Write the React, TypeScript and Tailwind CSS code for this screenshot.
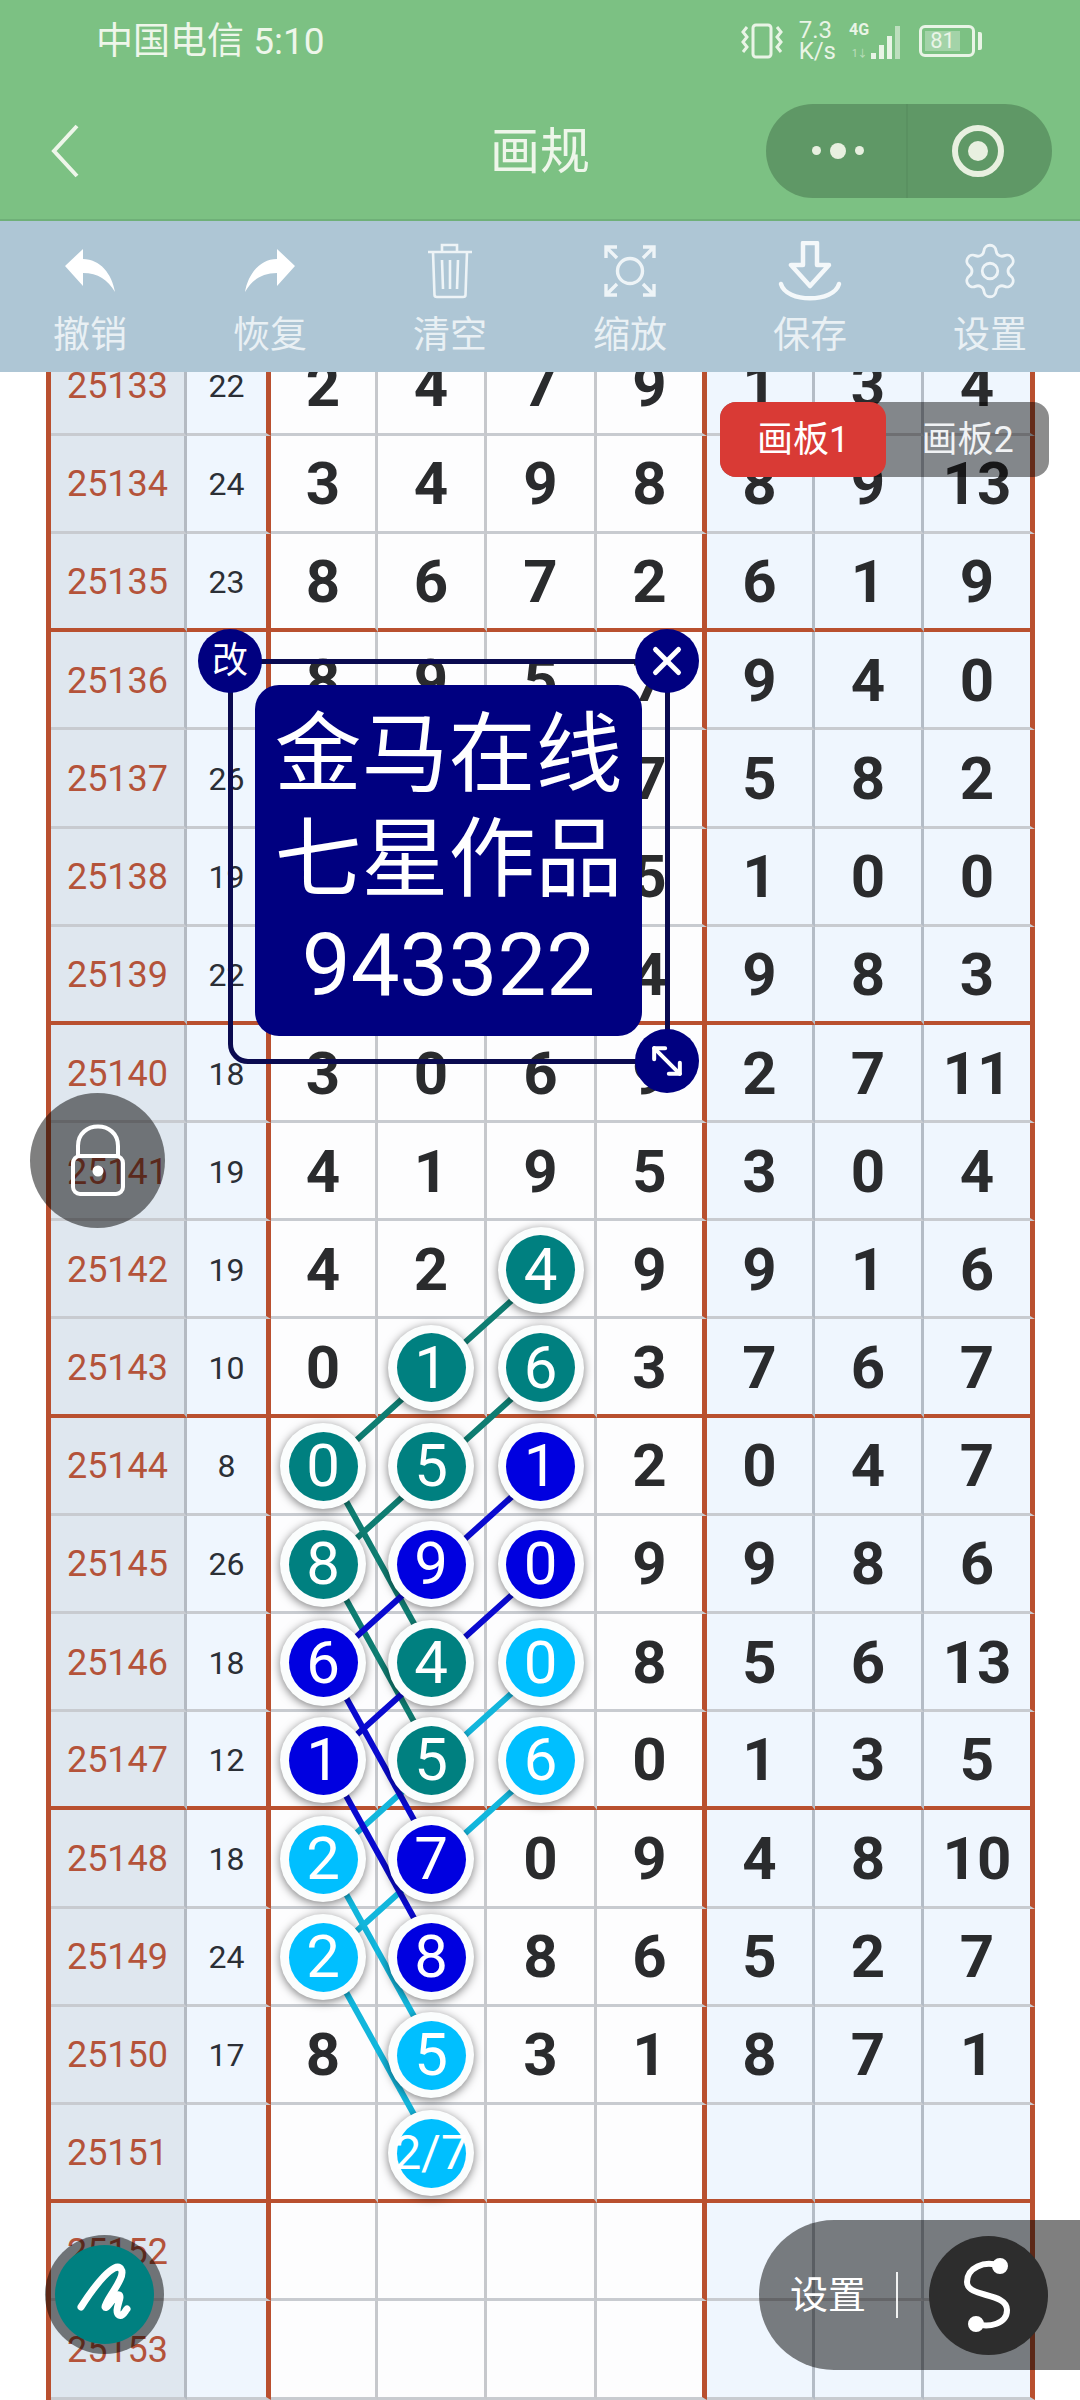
// App.tsx
import { Settings, X, MoveDiagonal2 } from 'lucide-react'

type Mark = { v: string; c: string }
type Val = string | Mark

const t = (v: string): Mark => ({ v, c: 'bg-[#008080]' })
const b = (v: string): Mark => ({ v, c: 'bg-[#0000e0]' })
const c = (v: string): Mark => ({ v, c: 'bg-[#00bfff]' })

// the cells hidden behind the note are left blank
const rows: { id: number; sum: string; cells: Val[] }[] = [
    { id: 25133, sum: '22', cells: ['2', '4', '7', '9', '1', '3', '4'] },
    { id: 25134, sum: '24', cells: ['3', '4', '9', '8', '8', '9', '13'] },
    { id: 25135, sum: '23', cells: ['8', '6', '7', '2', '6', '1', '9'] },
    { id: 25136, sum: '', cells: ['8', '9', '5', '7', '9', '4', '0'] },
    { id: 25137, sum: '26', cells: ['', '', '', '7', '5', '8', '2'] },
    { id: 25138, sum: '19', cells: ['', '', '', '5', '1', '0', '0'] },
    { id: 25139, sum: '22', cells: ['', '', '', '4', '9', '8', '3'] },
    { id: 25140, sum: '18', cells: ['3', '0', '6', '9', '2', '7', '11'] },
    { id: 25141, sum: '19', cells: ['4', '1', '9', '5', '3', '0', '4'] },
    { id: 25142, sum: '19', cells: ['4', '2', t('4'), '9', '9', '1', '6'] },
    { id: 25143, sum: '10', cells: ['0', t('1'), t('6'), '3', '7', '6', '7'] },
    { id: 25144, sum: '8', cells: [t('0'), t('5'), b('1'), '2', '0', '4', '7'] },
    { id: 25145, sum: '26', cells: [t('8'), b('9'), b('0'), '9', '9', '8', '6'] },
    { id: 25146, sum: '18', cells: [b('6'), t('4'), c('0'), '8', '5', '6', '13'] },
    { id: 25147, sum: '12', cells: [b('1'), t('5'), c('6'), '0', '1', '3', '5'] },
    { id: 25148, sum: '18', cells: [c('2'), b('7'), '0', '9', '4', '8', '10'] },
    { id: 25149, sum: '24', cells: [c('2'), b('8'), '8', '6', '5', '2', '7'] },
    { id: 25150, sum: '17', cells: ['8', c('5'), '3', '1', '8', '7', '1'] },
    { id: 25151, sum: '', cells: ['', c('2/7'), '', '', '', '', ''] },
    { id: 25152, sum: '', cells: ['', '', '', '', '', '', ''] },
    { id: 25153, sum: '', cells: ['', '', '', '', '', '', ''] },
]

const cellCols = [
    'bg-[#fdfdfe] border-r-[3px] border-r-[#c6c8cc]',
    'bg-[#fdfdfe] border-r-[3px] border-r-[#c6c8cc]',
    'bg-[#fdfdfe] border-r-[3px] border-r-[#c6c8cc]',
    'bg-[#fdfdfe] border-r-[5px] border-r-[#b9502f]',
    'bg-[#eff6fe] border-r-[3px] border-r-[#b4bcc6]',
    'bg-[#eff6fe] border-r-[3px] border-r-[#b4bcc6]',
    'bg-[#eff6fe] border-r-[5px] border-r-[#b9502f]',
]

const rowLine = (id: number) =>
    (id - 25135) % 4 === 0 ? 'border-b-4 border-b-[#b9502f]' : 'border-b-[3px] border-b-[#c8cbd0]'

// links between the marked numbers, drawn under the circles
const links: { color: string; pts: [number, number][] }[] = [
    { color: '#12b6dc', pts: [[2, 25146], [1, 25147], [0, 25148]] },
    { color: '#12b6dc', pts: [[2, 25147], [1, 25148], [0, 25149]] },
    { color: '#12b6dc', pts: [[0, 25148], [1, 25150]] },
    { color: '#12b6dc', pts: [[0, 25149], [1, 25151]] },
    { color: '#0f7d72', pts: [[2, 25142], [1, 25143], [0, 25144]] },
    { color: '#0f7d72', pts: [[2, 25143], [1, 25144], [0, 25145]] },
    { color: '#0f7d72', pts: [[0, 25144], [1, 25146]] },
    { color: '#0f7d72', pts: [[0, 25145], [1, 25147]] },
    { color: '#0a0ad0', pts: [[2, 25144], [1, 25145], [0, 25146]] },
    { color: '#0a0ad0', pts: [[2, 25145], [1, 25146], [0, 25147]] },
    { color: '#0a0ad0', pts: [[0, 25146], [1, 25148]] },
    { color: '#0a0ad0', pts: [[0, 25147], [1, 25149]] },
]

const toPoints = (pts: [number, number][]) =>
    pts.map(([col, id]) => `${276 + col * 109},${48.6 + (id - 25133) * 98.2}`).join(' ')

const Circle = ({ mark }: { mark: Mark }) => (
    <div className="relative z-10 flex h-[86px] w-[86px] shrink-0 items-center justify-center rounded-full bg-[#fbfdfd] shadow-[0_2px_10px_rgba(0,0,0,0.5)]">
        <div className={`flex h-[69px] w-[69px] items-center justify-center rounded-full font-normal text-white ${mark.c}`}>
            <span className={mark.v.length > 1 ? 'text-[48px] leading-none whitespace-nowrap' : 'text-[60px] leading-none'}>
                {mark.v}
            </span>
        </div>
    </div>
)

const UndoIcon = ({ className }: { className?: string }) => (
    <svg width="56" height="50" viewBox="0 0 56 50" className={className}>
        <path d="M3 20 L21 3 L21 13 C38 13 50 28 53 46 C46 34 36 27 21 27 L21 40 Z" fill="#fff" />
    </svg>
)

const TrashIcon = () => (
    <svg width="46" height="58" viewBox="0 0 46 58" fill="none" stroke="#eef4f7" strokeWidth="2.6">
        <path d="M1 10 H45" />
        <path d="M15 10 V3 H30 V10" />
        <path d="M6 10 L7.5 53 Q7.5 55 10 55 H36 Q38.500 55 38.500 53 L40 10" />
        <path d="M15 18 L16 47 M23 18 V47 M31 18 L30 47" />
    </svg>
)

const ScaleIcon = () => (
    <svg width="54" height="54" viewBox="0 0 54 54" fill="none" stroke="#eef4f7" strokeWidth="3.4">
        <circle cx="27" cy="27" r="12.500" />
        <path d="M3 14 V3 H14 M3 3 L14 14" />
        <path d="M40 3 H51 V14 M51 3 L40 14" />
        <path d="M3 40 V51 H14 M3 51 L14 40" />
        <path d="M40 51 H51 V40 M51 51 L40 40" />
    </svg>
)

const SaveIcon = () => (
    <svg width="64" height="60" viewBox="0 0 64 60" fill="none" stroke="#f4f8fa" strokeWidth="4.5" strokeLinejoin="round" strokeLinecap="round">
        <path d="M25 2 H39 V24 H51 L32 45 L13 24 H25 Z" />
        <path d="M3 43 C8 62 56 62 61 43" />
    </svg>
)

const StatusIcons = () => (
    <div className="flex items-center text-[#e9f4e6]">
        <svg width="46" height="36" viewBox="0 0 44 36" fill="none" stroke="currentColor" strokeWidth="3" className="mr-[14px]">
            <rect x="13" y="2" width="18" height="32" rx="3" />
            <path d="M7 4 L3 9 L7 14 L3 19 L7 24 L3 29" />
            <path d="M37 4 L41 9 L37 14 L41 19 L37 24 L41 29" />
        </svg>
        <div className="mr-[13px] flex flex-col text-[24px] leading-[21px]">
            <span>7.3</span>
            <span>K/s</span>
        </div>
        <div className="relative mr-[14px] h-[40px] w-[56px]">
            <span className="absolute left-0 top-0 text-[16px] font-bold leading-[18px]">4G</span>
            <span className="absolute left-[3px] bottom-0 text-[10px] leading-[14px] opacity-60">1↓</span>
            <svg width="56" height="40" viewBox="0 0 56 40" fill="currentColor" className="absolute inset-0">
                <rect x="22" y="32" width="5" height="6" />
                <rect x="30" y="24" width="5" height="14" />
                <rect x="38" y="15" width="5" height="23" />
                <rect x="46" y="5" width="5" height="33" opacity="0.6" />
            </svg>
        </div>
        <div className="relative flex h-[32px] w-[56px] items-center rounded-[6px] border-[3px] border-[#e9f4e6] p-[3px]">
            <div className="flex h-full w-[80%] items-center justify-center bg-white/30 text-[22px] leading-none">81</div>
        </div>
        <div className="ml-[3px] h-[18px] w-[4px] rounded-r-[2px] bg-[#e9f4e6]" />
    </div>
)

const tools = [
    { label: '撤销', icon: <UndoIcon /> },
    { label: '恢复', icon: <UndoIcon className="-scale-x-100" /> },
    { label: '清空', icon: <TrashIcon /> },
    { label: '缩放', icon: <ScaleIcon /> },
    { label: '保存', icon: <SaveIcon /> },
    { label: '设置', icon: <Settings size={62} strokeWidth={1.1} color="#eef4f7" /> },
]

export default function App() {
    return (
        <div className="relative h-[2400px] w-[1080px] overflow-hidden bg-white font-[Roboto,'Noto_Sans_CJK_SC',sans-serif]">
            <header className="relative z-20">
                <div className="h-[221px] border-b-2 border-b-[#6fb078] bg-[#7cc183] text-[#eef6ea]">
                    <div className="flex h-[82px] items-center justify-between pl-[96px] pr-[98px]">
                        <span className="text-[37px] leading-none">中国电信 5:10</span>
                        <StatusIcons />
                    </div>
                    <div className="grid h-[137px] grid-cols-[1fr_auto_1fr] items-center">
                        <svg width="30" height="54" viewBox="0 0 30 54" fill="none" stroke="currentColor" strokeWidth="4" className="ml-[50px]">
                            <path d="M27 2 L4 27 L27 52" />
                        </svg>
                        <span className="pt-[3px] text-[50px] leading-none">画规</span>
                        <div className="flex justify-end pr-[28px]">
                            <div className="flex h-[94px] w-[286px] items-center rounded-full bg-[#5f9866]">
                                <div className="flex h-full w-[142px] items-center justify-center gap-[9px] border-r-2 border-r-[#5a9161] pl-[4px]">
                                    <span className="h-[9px] w-[9px] rounded-full bg-[#e8f0e0]" />
                                    <span className="h-[16px] w-[16px] rounded-full bg-[#e8f0e0]" />
                                    <span className="h-[9px] w-[9px] rounded-full bg-[#e8f0e0]" />
                                </div>
                                <div className="flex flex-1 items-center justify-center pr-[4px]">
                                    <div className="flex h-[52px] w-[52px] items-center justify-center rounded-full border-[6px] border-[#e8f0e0]">
                                        <span className="h-[20px] w-[20px] rounded-full bg-[#e8f0e0]" />
                                    </div>
                                </div>
                            </div>
                        </div>
                    </div>
                </div>
                <div className="grid h-[151px] grid-cols-6 bg-[#aec6d5] pt-[20px]">
                    {tools.map(tool => (
                        <div key={tool.label} className="flex flex-col items-center">
                            <div className="flex h-[60px] items-center justify-center">{tool.icon}</div>
                            <span className="mt-[11px] text-[37px] leading-[48px] text-[#e9f0f4]">{tool.label}</span>
                        </div>
                    ))}
                </div>
            </header>

            <div className="h-[2028px] overflow-hidden">
                <div className="relative ml-[46px] mt-[-34.4px] w-[989px] border-l-[5px] border-l-[#b9502f]">
                    <div className="grid grid-cols-[136px_84px_107px_109px_110px_110px_108px_109px_111px] auto-rows-[98.2px]">
                        {rows.map(row => (
                            <div key={row.id} className="contents">
                                <div className={`flex items-center justify-center border-r-[3px] border-r-[#b4bac2] bg-[#dfe7ef] pt-[2px] text-[36px] text-[#b4533a] ${rowLine(row.id)}`}>
                                    {row.id}
                                </div>
                                <div className={`flex items-center justify-center border-r-[5px] border-r-[#b9502f] bg-[#eff6fe] pt-[2px] text-[32px] text-[#2b2f36] ${rowLine(row.id)}`}>
                                    {row.sum}
                                </div>
                                {row.cells.map((cell, i) => (
                                    <div key={i} className={`flex items-center justify-center pt-[2px] text-[60px] font-bold leading-none text-[#2a2b2d] ${cellCols[i]} ${rowLine(row.id)}`}>
                                        {typeof cell === 'string' ? cell : <Circle mark={cell} />}
                                    </div>
                                ))}
                            </div>
                        ))}
                    </div>
                    <svg className="absolute inset-0 z-[5]" width="989" height="2062" fill="none" strokeWidth="6">
                        {links.map((link, i) => (
                            <polyline key={i} points={toPoints(link.pts)} stroke={link.color} />
                        ))}
                    </svg>
                </div>
            </div>

            {/* board tabs */}
            <div className="absolute left-[720px] top-[402px] z-10 flex h-[75px] w-[329px] rounded-[16px] bg-black/45 text-[36px] leading-none text-white">
                <div className="flex w-[166px] items-center justify-center rounded-[16px] bg-[#d93a35]">画板1</div>
                <div className="flex flex-1 items-center justify-center text-[#f0f2f4]">画板2</div>
            </div>

            {/* note on the canvas */}
            <div className="absolute left-[228px] top-[659px] z-10 h-[405px] w-[442px] rounded-[20px] border-[5px] border-[#0a0a50]" />
            <div className="absolute left-[255px] top-[685px] z-10 flex h-[351px] w-[387px] flex-col items-center justify-center rounded-[24px] bg-[#000080] text-[87px] leading-[105px] text-white">
                <span>金马在线</span>
                <span>七星作品</span>
                <span>943322</span>
            </div>
            <div className="absolute left-[198px] top-[629px] z-10 flex h-[64px] w-[64px] items-center justify-center rounded-full bg-[#000080] text-[36px] leading-none text-white">改</div>
            <div className="absolute left-[635px] top-[629px] z-10 flex h-[64px] w-[64px] items-center justify-center rounded-full bg-[#000080] text-white">
                <X size={46} strokeWidth={2.6} />
            </div>
            <div className="absolute left-[635px] top-[1029px] z-10 flex h-[64px] w-[64px] items-center justify-center rounded-full bg-[#000080] text-white">
                <MoveDiagonal2 size={44} strokeWidth={2.2} />
            </div>

            {/* lock */}
            <div className="absolute left-[30px] top-[1093px] z-10 flex h-[135px] w-[135px] items-center justify-center rounded-full bg-black/50">
                <svg width="56" height="74" viewBox="0 0 56 74" fill="none" stroke="#fff" strokeWidth="4">
                    <path d="M8 32 V22 C8 -4 48 -4 48 22 V32" />
                    <rect x="3" y="32" width="50" height="38" rx="7" />
                    <circle cx="28" cy="47" r="5.500" fill="#fff" stroke="none" />
                </svg>
            </div>

            {/* brush */}
            <div className="absolute left-[45px] top-[2235px] z-10 flex h-[119px] w-[119px] items-center justify-center rounded-full bg-black/50">
                <div className="h-[99px] w-[99px] rounded-full bg-[#008080]">
                    <svg width="99" height="99" viewBox="0 0 99 99" fill="none" stroke="#fff" strokeWidth="7" strokeLinecap="round" strokeLinejoin="round">
                        <path d="M26 62 C40 40 60 15 66 24 C72 32 50 55 50 62 C52 66 60 48 64 50 C68 52 58 66 64 70 C68 72 70 66 72 64" />
                    </svg>
                </div>
            </div>

            {/* settings pill */}
            <div className="absolute right-0 top-[2220px] z-10 flex h-[150px] w-[321px] items-center rounded-l-[75px] bg-black/50 pl-[31px] text-white">
                <span className="text-[38px] leading-none">设置</span>
                <span className="ml-[30px] h-[46px] w-[2px] bg-white/90" />
                <div className="ml-[31px] h-[119px] w-[119px] rounded-full bg-[#2d2d2d]">
                    <svg width="119" height="119" viewBox="0 0 119 119" fill="none" stroke="#fff" strokeWidth="6" strokeLinecap="round">
                        <path d="M71 30 C55 24 38 32 38 46 C38 62 78 56 78 74 C78 88 60 92 47 88" />
                        <circle cx="71" cy="30" r="5" fill="#fff" />
                        <circle cx="47" cy="88" r="5" fill="#fff" />
                    </svg>
                </div>
            </div>
        </div>
    )
}
